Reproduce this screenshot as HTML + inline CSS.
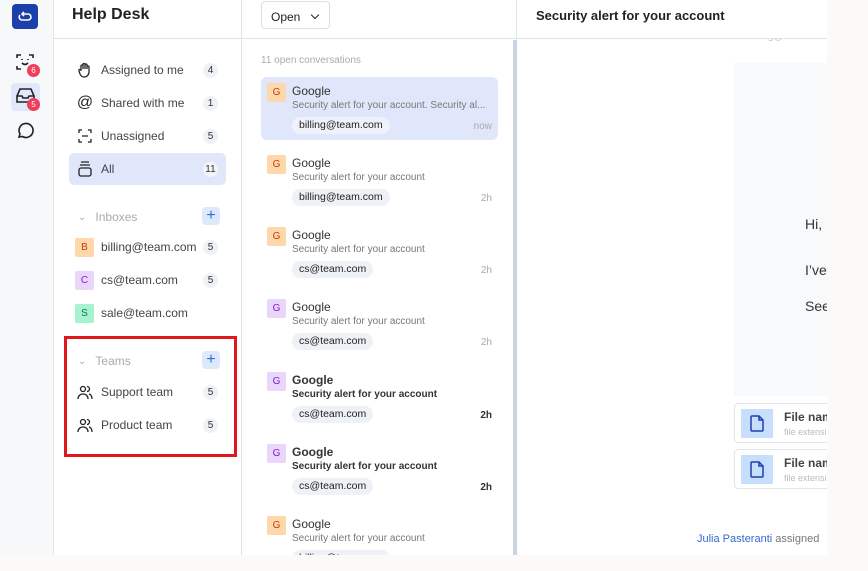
<!DOCTYPE html>
<html><head><meta charset="utf-8"><style>
*{box-sizing:border-box;margin:0;padding:0}
body{width:868px;height:571px;overflow:hidden;background:#fbfaf8;font-family:"Liberation Sans",sans-serif;position:relative;color:#2b2d33}
.abs{position:absolute}
.rail{left:0;top:0;width:54px;height:555px;background:#f7f8fa;border-right:1px solid #e3e5ea}
.side{left:54px;top:0;width:188px;height:555px;background:#fff;border-right:1px solid #dfe2e8}
.list{left:242px;top:0;width:275px;height:555px;background:#fff;border-right:1px solid #e3e5ea}
.detail{left:517px;top:0;width:310px;height:555px;background:#fff}
.hline{left:54px;top:38px;width:773px;height:1px;background:#dfe2e8}
.nav{position:absolute;left:15px;width:157px;height:32px;border-radius:5px;display:flex;align-items:center;font-size:12px;color:#444}
.nav .ic{width:32px;display:flex;justify-content:center}
.cnt{position:absolute;right:8px;top:9px;width:15px;height:15px;border-radius:8px;background:#eef1f6;font-size:10px;display:flex;align-items:center;justify-content:center;color:#333}
.av{width:19px;height:19px;border-radius:2px;font-size:10px;display:flex;align-items:center;justify-content:center;margin:0 7px 0 6px}
.sec{position:absolute;left:24px;font-size:12px;color:#aaa;display:flex;align-items:center}
.plus{position:absolute;left:148px;width:18px;height:18px;border-radius:4px;background:#dde8fb;color:#3568d4;font-size:16px;display:flex;align-items:center;justify-content:center}
.conv{position:absolute;left:19px;width:237px;height:63px;border-radius:6px}
.conv .g{position:absolute;left:6px;top:6px;width:19px;height:19px;border-radius:2px;font-size:10px;display:flex;align-items:center;justify-content:center}
.conv .t{position:absolute;left:31px;top:7px;font-size:12px;color:#333}
.conv .s{position:absolute;left:31px;top:23px;font-size:10px;color:#777;white-space:nowrap}
.conv .tag{position:absolute;left:31px;top:40px;height:17px;padding:0 7px;border-radius:9px;background:#eef1f6;font-size:10.5px;color:#222;line-height:17px}
.conv .tm{position:absolute;right:6px;top:44px;font-size:10px;color:#aaa}
.b .t,.b .s{font-weight:bold;color:#333}.b .tm{color:#333;font-weight:bold}
.orange{background:#fed7aa;color:#c2410c}.purple{background:#ead6fb;color:#7e22ce}.green{background:#a7f3d0;color:#047857}
.file{position:absolute;left:217px;width:100px;height:40px;border:1px solid #e3e5ea;border-radius:4px;background:#fff}
.file .fi{position:absolute;left:6px;top:5px;width:32px;height:29px;background:#c7defd;display:flex;align-items:center;justify-content:center}
</style></head><body>
<div class="abs rail">
 <div class="abs" style="left:12px;top:4px;width:26px;height:25px;border-radius:4px;background:#1d3faa;display:flex;align-items:center;justify-content:center">
  <svg width="14" height="12" viewBox="0 0 14 12" fill="none" stroke="#fff" stroke-width="1.6"><path d="M4 3H10a3 3 0 0 1 0 6H4a3 3 0 0 1-2-5"/><path d="M6 1L4 3l2 2"/></svg></div>
 <svg class="abs" style="left:16px;top:53px" width="18" height="18" viewBox="0 0 18 18" fill="none" stroke="#222" stroke-width="1.6"><path d="M1 5V2h4M13 2h4v3M17 13v3h-4M5 16H1v-3"/><path d="M6 10q3 3 6 0"/><path d="M6 6v1M12 6v1"/></svg>
 <div class="abs" style="left:27px;top:64px;width:13px;height:13px;border-radius:7px;background:#ef3e5a;color:#fff;font-size:8px;display:flex;align-items:center;justify-content:center">6</div>
 <div class="abs" style="left:11px;top:83px;width:29px;height:28px;border-radius:4px;background:#e2e8fb"></div>
 <svg class="abs" style="left:16px;top:88px" width="19" height="16" viewBox="0 0 19 16" fill="none" stroke="#222" stroke-width="1.6"><path d="M1 8l3-7h11l3 7v6H1z"/><path d="M1 8h5l1 2h5l1-2h5"/></svg>
 <div class="abs" style="left:27px;top:98px;width:13px;height:13px;border-radius:7px;background:#ef3e5a;color:#fff;font-size:8px;display:flex;align-items:center;justify-content:center">5</div>
 <svg class="abs" style="left:16px;top:122px" width="18" height="18" viewBox="0 0 18 18" fill="none" stroke="#222" stroke-width="1.6"><path d="M3 15l1-3a7 7 0 1 1 2.5 2.5z"/></svg>
</div>
<div class="abs side">
 <div class="abs" style="left:18px;top:6px;font-size:16px;font-weight:bold;color:#222">Help Desk</div>
 <div class="nav" style="top:54px"><div class="ic"><svg width="16" height="16" viewBox="0 0 16 16" fill="none" stroke="#222" stroke-width="1.3"><path d="M4 9V4a1 1 0 0 1 2 0v3V2.5a1 1 0 0 1 2 0V7V3a1 1 0 0 1 2 0v4V5a1 1 0 0 1 2 0v5a5 5 0 0 1-5 5c-2 0-3-1-4-3L2 9a1 1 0 0 1 2-1z"/></svg></div>Assigned to me<div class="cnt">4</div></div>
 <div class="nav" style="top:87px"><div class="ic" style="font-size:16px;color:#222">@</div>Shared with me<div class="cnt">1</div></div>
 <div class="nav" style="top:120px"><div class="ic"><svg width="14" height="14" viewBox="0 0 14 14" fill="none" stroke="#222" stroke-width="1.3"><path d="M1 4V1h3M10 1h3v3M13 10v3h-3M4 13H1v-3M4 7h6"/></svg></div>Unassigned<div class="cnt">5</div></div>
 <div class="nav" style="top:153px;background:#e1e7fb"><div class="ic"><svg width="14" height="16" viewBox="0 0 14 16" fill="none" stroke="#222" stroke-width="1.3"><path d="M3 1h8M2 4h10"/><rect x="1" y="7" width="12" height="8" rx="2"/></svg></div>All<div class="cnt" style="background:#f2f4f8">11</div></div>
 <div class="sec" style="top:210px"><span style="font-size:10px;margin-right:9px">&#8964;</span>Inboxes</div><div class="plus" style="top:207px">+</div>
 <div class="nav" style="top:231px"><div class="av orange">B</div>billing@team.com<div class="cnt">5</div></div>
 <div class="nav" style="top:264px"><div class="av purple">C</div>cs@team.com<div class="cnt">5</div></div>
 <div class="nav" style="top:297px"><div class="av green">S</div>sale@team.com</div>
 <div class="sec" style="top:354px"><span style="font-size:10px;margin-right:9px">&#8964;</span>Teams</div><div class="plus" style="top:351px">+</div>
 <div class="nav" style="top:376px"><div class="ic"><svg width="16" height="15" viewBox="0 0 16 15" fill="none" stroke="#222" stroke-width="1.3"><circle cx="6" cy="4" r="2.5"/><path d="M1 14c0-3 2-5 5-5s5 2 5 5M10 1.5a2.5 2.5 0 0 1 0 5M12 9c2 .5 3 2 3 5"/></svg></div>Support team<div class="cnt">5</div></div>
 <div class="nav" style="top:409px"><div class="ic"><svg width="16" height="15" viewBox="0 0 16 15" fill="none" stroke="#222" stroke-width="1.3"><circle cx="6" cy="4" r="2.5"/><path d="M1 14c0-3 2-5 5-5s5 2 5 5M10 1.5a2.5 2.5 0 0 1 0 5M12 9c2 .5 3 2 3 5"/></svg></div>Product team<div class="cnt">5</div></div>
 <div class="abs" style="left:10px;top:336px;width:173px;height:121px;border:3px solid #e0181e"></div>
</div>
<div class="abs list">
 <div class="abs" style="left:19px;top:1px;width:69px;height:28px;border:1px solid #dcdfe5;border-radius:4px;font-size:12px;color:#222;padding:8px 0 0 9px">Open <span style="display:inline-block;width:6px;height:6px;border-right:1.5px solid #222;border-bottom:1.5px solid #222;transform:rotate(45deg);margin:0 0 3px 8px"></span></div>
 <div class="abs" style="left:19px;top:55px;font-size:10px;color:#aaa">11 open conversations</div>
 <div class="abs" style="left:271px;top:40px;width:4px;height:515px;background:#cbd3e3"></div>
 <div class="conv" style="top:77px;background:#e1e7fb"><div class="g orange">G</div><div class="t">Google</div><div class="s">Security alert for your account. Security al...</div><div class="tag" style="background:#eff2fa">billing@team.com</div><div class="tm">now</div></div>
 <div class="conv" style="top:149px"><div class="g orange">G</div><div class="t">Google</div><div class="s">Security alert for your account</div><div class="tag">billing@team.com</div><div class="tm">2h</div></div>
 <div class="conv" style="top:221px"><div class="g orange">G</div><div class="t">Google</div><div class="s">Security alert for your account</div><div class="tag">cs@team.com</div><div class="tm">2h</div></div>
 <div class="conv" style="top:293px"><div class="g purple">G</div><div class="t">Google</div><div class="s">Security alert for your account</div><div class="tag">cs@team.com</div><div class="tm">2h</div></div>
 <div class="conv b" style="top:366px"><div class="g purple">G</div><div class="t">Google</div><div class="s">Security alert for your account</div><div class="tag">cs@team.com</div><div class="tm">2h</div></div>
 <div class="conv b" style="top:438px"><div class="g purple">G</div><div class="t">Google</div><div class="s">Security alert for your account</div><div class="tag">cs@team.com</div><div class="tm">2h</div></div>
 <div class="conv" style="top:510px;height:45px;overflow:hidden"><div class="g orange">G</div><div class="t">Google</div><div class="s">Security alert for your account</div><div class="tag">billing@team.com</div></div>
</div>
<div class="abs detail">
 <div class="abs" style="left:217px;top:31px;font-size:10px;color:#bbb;white-space:nowrap">to: billing@team.c</div>
 <div class="abs" style="left:0;top:0;width:310px;height:38px;background:#fff"></div>
 <div class="abs" style="left:19px;top:8px;font-size:13px;font-weight:bold;color:#222">Security alert for your account</div>
 <div class="abs" style="left:217px;top:63px;width:93px;height:333px;background:#f8f9fb"></div>
 <div class="abs" style="left:288px;top:216px;font-size:14px;color:#333">Hi,</div>
 <div class="abs" style="left:288px;top:262px;font-size:14px;color:#333;white-space:nowrap">I’ve</div>
 <div class="abs" style="left:288px;top:298px;font-size:14px;color:#333;white-space:nowrap">See</div>
 <div class="file" style="top:403px"><div class="fi"><svg width="14" height="17" viewBox="0 0 14 17" fill="none" stroke="#1e3fae" stroke-width="1.5"><path d="M1 2a1 1 0 0 1 1-1h7l4 4v10a1 1 0 0 1-1 1H2a1 1 0 0 1-1-1z"/><path d="M9 1v4h4"/></svg></div><div class="abs" style="left:49px;top:6px;font-size:12px;font-weight:bold;color:#444;white-space:nowrap">File name</div><div class="abs" style="left:49px;top:23px;font-size:9px;color:#bbb;white-space:nowrap">file extension</div></div>
 <div class="file" style="top:449px"><div class="fi"><svg width="14" height="17" viewBox="0 0 14 17" fill="none" stroke="#1e3fae" stroke-width="1.5"><path d="M1 2a1 1 0 0 1 1-1h7l4 4v10a1 1 0 0 1-1 1H2a1 1 0 0 1-1-1z"/><path d="M9 1v4h4"/></svg></div><div class="abs" style="left:49px;top:6px;font-size:12px;font-weight:bold;color:#444;white-space:nowrap">File name</div><div class="abs" style="left:49px;top:23px;font-size:9px;color:#bbb;white-space:nowrap">file extension</div></div>
 <div class="abs" style="left:180px;top:533px;font-size:11px;color:#777;white-space:nowrap"><span style="color:#3568d4">Julia Pasteranti</span> assigned</div>
</div>
<div class="abs" style="left:827px;top:0;width:41px;height:571px;background:#fbfaf8"></div>
<div class="abs hline"></div>
</body></html>
